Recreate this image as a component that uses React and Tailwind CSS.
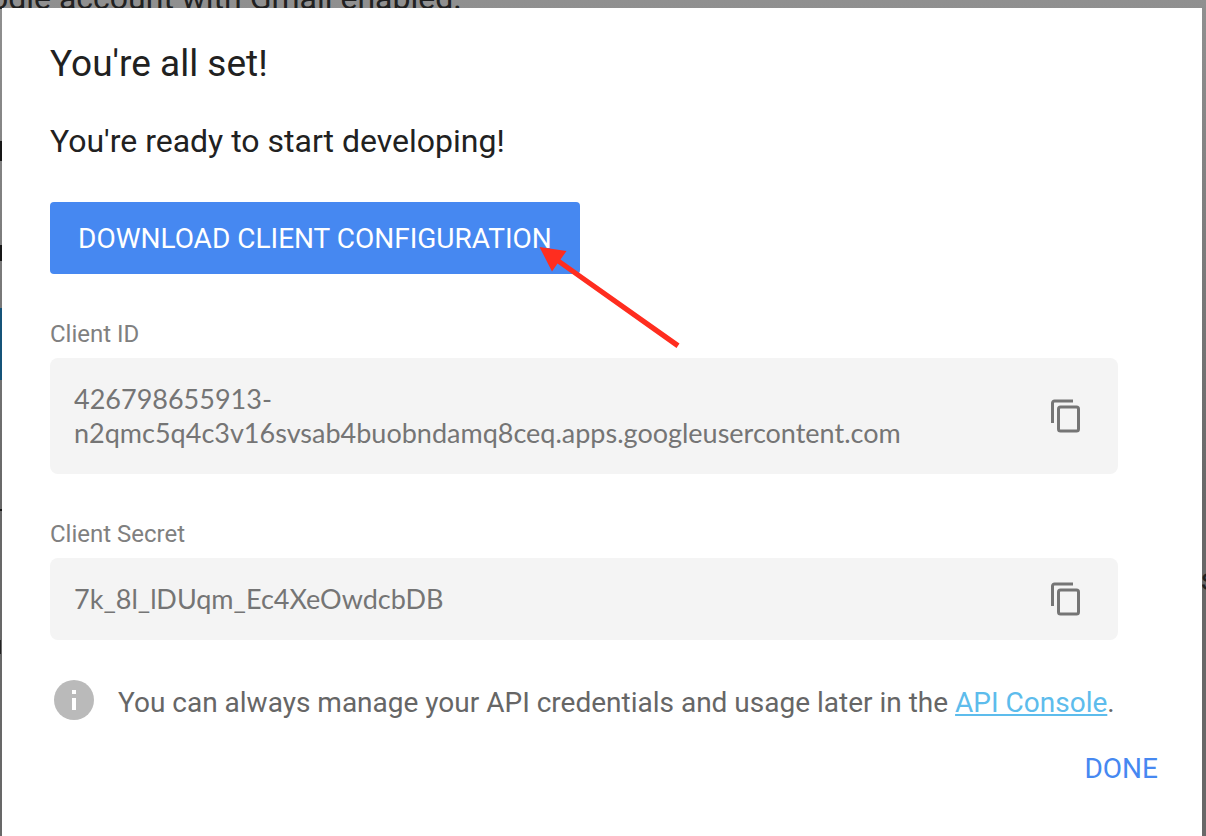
function CopyIcon() {
  return (
    <svg viewBox="0 0 32 36" className="h-9 w-8" fill="none" stroke="#757575" strokeWidth="3" aria-hidden="true">
      <path d="M2.5 25V5a2 2 0 0 1 2-2H23" />
      <rect x="8.500" y="9" width="20" height="24" rx="2" />
    </svg>
  );
}

function Credential({ label, children }) {
  return (
    <section className="flex flex-col">
      <h3 className="mb-2 text-2xl leading-8 text-[#808080]">{label}</h3>
      <div className="flex items-center justify-between rounded-lg bg-[#f4f4f4] py-6 pr-9 pl-6">
        <p className="font-[Lato,sans-serif] text-[27px] leading-[34px] text-[#757575]">{children}</p>
        <button type="button" aria-label={`Copy ${label}`} className="-my-1">
          <CopyIcon />
        </button>
      </div>
    </section>
  );
}

function Backdrop() {
  return (
    <div aria-hidden="true" className="absolute inset-0 overflow-hidden bg-linear-to-b from-[#909090] to-[#686868] to-60%">
      <p className="absolute -top-[18px] -left-[10px] text-[32px] leading-8 whitespace-nowrap text-[#212121]">
        ogle account with Gmail enabled.
      </p>
      <div className="absolute top-[141px] left-0 h-5 w-1 bg-[#171717]" />
      <div className="absolute top-[245px] left-0 h-4 w-1 bg-[#171717]" />
      <div className="absolute top-[308px] left-0 h-[72px] w-1 bg-[#155379]" />
      <div className="absolute top-[509px] left-0 h-[2px] w-1 bg-[#171717]" />
      <div className="absolute top-[640px] left-0 h-[14px] w-px bg-[#222222]" />
      <p className="absolute top-[563px] -right-[11px] text-[32px] leading-8 text-[#212121]">s</p>
    </div>
  );
}

export default function App() {
  return (
    <div className="relative flex min-h-screen flex-col overflow-hidden pt-2 pr-1 pl-[2px] font-[Roboto,sans-serif]">
      <Backdrop />
      <main role="dialog" aria-labelledby="title" className="relative flex flex-1 flex-col bg-white px-12 pt-8">
        <h1 id="title" className="text-[37px] leading-12 text-[#212121]">You're all set!</h1>
        <h2 className="mt-8 text-[32px] leading-[42px] text-[#212121]">You're ready to start developing!</h2>
        <div className="relative mt-10 self-start">
          <button type="button" className="h-[72px] rounded bg-[#4688f1] px-7 pt-[2px] text-[28px] leading-10 whitespace-nowrap text-white">
            DOWNLOAD CLIENT CONFIGURATION
          </button>
          <svg viewBox="0 0 144 106" className="absolute top-11 left-[488px] h-[106px] w-36" fill="#ff2d1f" aria-hidden="true">
            <path d="M1.500 1L28.500 5l-6 8.500L141.500 97.500l-3 4.500L19.500 17.500L14 25.500z" />
          </svg>
        </div>
        <div className="mt-11 mr-9 flex flex-col gap-11">
          <Credential label="Client ID">
            426798655913-<br />n2qmc5q4c3v16svsab4buobndamq8ceq.apps.googleusercontent.com
          </Credential>
          <Credential label="Client Secret">7k_8l_lDUqm_Ec4XeOwdcbDB</Credential>
        </div>
        <div className="mt-10 flex items-start gap-6 pl-1">
          <svg viewBox="0 0 40 40" className="size-10 shrink-0" aria-hidden="true">
            <circle cx="20" cy="20" r="20" fill="#bababa" />
            <path d="M18 10h4v4h-4zM18 18h4v12h-4z" fill="#fff" />
          </svg>
          <p className="pt-1 text-[28px] leading-[38px] text-[#666666]">
            You can always manage your API credentials and usage later in the{' '}
            <a href="#console" className="text-[#5dbcec] underline">API Console</a>.
          </p>
        </div>
        <button type="button" className="mt-[26px] -mr-1 self-end text-[28px] leading-[42px] text-[#4688f1]">DONE</button>
      </main>
    </div>
  );
}
